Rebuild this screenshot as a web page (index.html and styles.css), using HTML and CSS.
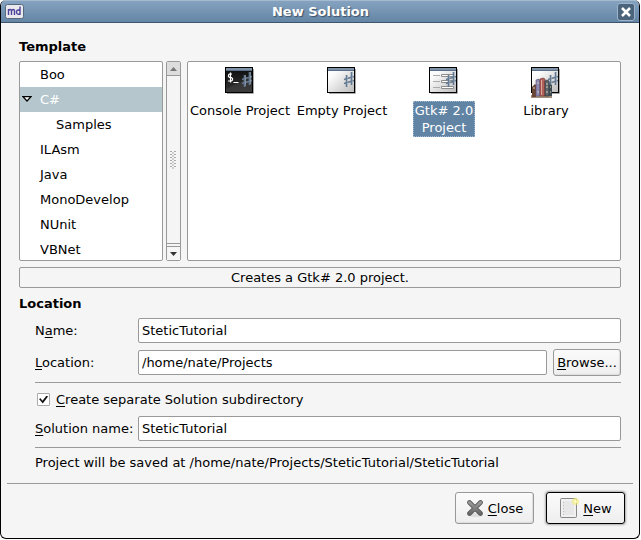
FILE: index.html
```html
<!DOCTYPE html>
<html lang="en">
<head>
<meta charset="utf-8">
<title>New Solution</title>
<link rel="stylesheet" href="styles.css">
</head>
<body>
<svg class="defs" aria-hidden="true">
  <defs>
    <linearGradient id="paper" x1="0" y1="0" x2="1" y2="1"><stop offset="0" stop-color="#fff"/><stop offset=".25" stop-color="#fbfbfb"/><stop offset="1" stop-color="#bbb"/></linearGradient>
    <linearGradient id="steel" x1="0" y1="0" x2="0" y2="1"><stop offset="0" stop-color="#9a9a9a"/><stop offset="1" stop-color="#686868"/></linearGradient>
    <linearGradient id="night" x1="0" y1="0" x2="0" y2="1"><stop offset="0" stop-color="#111"/><stop offset="1" stop-color="#343434"/></linearGradient>
    <g id="sharp" fill="none" stroke="#647a93">
      <path d="M19.500 8v12M24.500 5v13" stroke-width="1.600"/>
      <path d="M17 12.500l10-3M17 16.500l10-3" stroke-width="1.400"/>
      <path d="M20.500 8v11M25.500 5v12" stroke="#a5b3c2" stroke-width=".6"/>
    </g>
    <g id="frame">
      <path d="M2 26.500h26.500V2" fill="none" stroke="#aaa"/>
      <rect x=".5" y=".5" width="27" height="25" fill="url(#paper)" stroke="#000"/>
      <path d="M1 2.500h26" stroke="#8093a6" stroke-width="3"/>
      <path d="M1 3.500h26" stroke="#586f89"/>
    </g>
  </defs>
</svg>
<main class="window">
  <header class="titlebar">
    <svg class="logo" width="19" height="15" viewBox="0 0 19 15" aria-hidden="true">
      <rect x=".5" y=".5" width="18" height="14" rx="2" fill="#e9e9ee" stroke="#56687c"/>
      <g fill="none" stroke="#4b4399" stroke-width="1.400"><path d="M3.500 11V5M3.500 6.500q2-2 3 0V11M6.500 6.500q2.500-2 3 0V11M15 2.500V11M15 6.500q-3.500-1.500-3.500 1.500t3.500 2"/></g>
    </svg>
    <h1>New Solution</h1>
    <button class="close" type="button" aria-label="Close window">
      <svg width="10" height="10" viewBox="0 0 10 10"><path d="M1 1l8 8M9 1l-8 8" stroke="#fff" stroke-width="2.500"/></svg>
    </button>
  </header>
  <form class="content">
    <section class="template">
      <h2>Template</h2>
      <div class="panes">
        <ul class="tree">
          <li>Boo</li>
          <li class="current"><svg class="expander" width="10" height="6" viewBox="0 0 10 6" aria-hidden="true"><path d="M1 .7h8L5 5z" fill="#fff" stroke="#000" stroke-width="1.200"/></svg>C#</li>
          <li class="child">Samples</li>
          <li>ILAsm</li>
          <li>Java</li>
          <li>MonoDevelop</li>
          <li>NUnit</li>
          <li>VBNet</li>
        </ul>
        <div class="scrollbar">
          <button class="step off" type="button" aria-label="Scroll up"><svg width="7" height="4" viewBox="0 0 7 4"><path d="M0 4l3.500-4L7 4z" fill="#777"/></svg></button>
          <div class="thumb"><svg width="7" height="18" viewBox="0 0 7 18" aria-hidden="true"><path d="M1 0v18M5 0v18" stroke="#aaa" stroke-width="2" stroke-dasharray="1 2"/><path d="M3 1.500v16" stroke="#aaa" stroke-width="2" stroke-dasharray="1 2"/></svg></div>
          <button class="step" type="button" aria-label="Scroll down"><svg width="7" height="4" viewBox="0 0 7 4"><path d="M0 0h7L3.500 4z" fill="#333"/></svg></button>
        </div>
        <div class="projects">
          <button class="project" type="button">
            <svg width="30" height="32" viewBox="0 0 30 32" aria-hidden="true">
              <use href="#frame"/><path d="M1 4h26v21H1z" fill="url(#night)"/><path d="M1 22L27 9v16H1z" fill="#444" opacity=".5"/>
              <use href="#sharp"/>
              <path d="M7 7H4.500L3.500 8v1.500l1 1h2l1 1V13l-1 1H3M5.500 5.500v10M8.500 15.500h5" fill="none" stroke="#fff" stroke-width="1.200"/>
            </svg>
            <span>Console Project</span>
          </button>
          <button class="project" type="button">
            <svg width="30" height="32" viewBox="0 0 30 32" aria-hidden="true"><use href="#frame"/><use href="#sharp"/></svg>
            <span>Empty Project</span>
          </button>
          <button class="project selected" type="button">
            <svg width="30" height="32" viewBox="0 0 30 32" aria-hidden="true">
              <use href="#frame"/>
              <path d="M4 8.500h7M4 14.500h7M4 20.500h7" stroke="#aaa"/>
              <path d="M12.500 7.500h12v2h-12zM12.500 13.500h12v2h-12zM12.500 19.500h12v2h-12z" fill="#fff" stroke="#8c8c8c"/>
              <use href="#sharp"/>
            </svg>
            <span>Gtk# 2.0<br>Project</span>
          </button>
          <button class="project" type="button">
            <svg width="30" height="32" viewBox="0 0 30 32" aria-hidden="true">
              <use href="#frame"/><use href="#sharp"/>
              <path d="M0 28h21v3H0z" fill="#a08c78"/>
              <path d="M1 20l3-3 1 1v12H1z" fill="#6b4636"/>
              <path d="M5 13l3-1 1 2v15H5z" fill="#8d88b5" stroke="#55506f" stroke-width=".6"/>
              <path d="M9 12l3-1 2 1v17H9z" fill="#b2605a" stroke="#6b302b" stroke-width=".6"/>
              <path d="M10.500 13v15" stroke="#dba79b"/>
              <path d="M14 14l2-1 2 1v15h-4z" fill="#5c666d" stroke="#262d33" stroke-width=".6"/>
              <path d="M18 17l3 1v11h-3z" fill="#3f4b53"/>
              <path d="M6 16h2M6 25h2M15 17h2M15 20h2M15 25h2M2 21h2M19 20h1M19 25h1" stroke="#d6cfb4"/>
            </svg>
            <span>Library</span>
          </button>
        </div>
      </div>
      <p class="description">Creates a Gtk# 2.0 project.</p>
    </section>
    <section class="location">
      <h2>Location</h2>
      <div class="fields">
        <div class="row"><label for="name">N<u>a</u>me:</label><input id="name" type="text" value="SteticTutorial"></div>
        <div class="row"><label for="path"><u>L</u>ocation:</label><input id="path" type="text" value="/home/nate/Projects"><button class="button browse" type="button"><span><u>B</u>rowse...</span></button></div>
        <hr>
        <div class="check"><input id="separate" type="checkbox" checked><label for="separate"><u>C</u>reate separate Solution subdirectory</label></div>
        <div class="row"><label for="solution"><u>S</u>olution name:</label><input id="solution" type="text" value="SteticTutorial"></div>
        <hr>
        <p class="saved">Project will be saved at /home/nate/Projects/SteticTutorial/SteticTutorial</p>
      </div>
    </section>
  </form>
  <footer class="actions">
    <button class="button" type="button">
      <svg width="18" height="20" viewBox="0 0 18 20" aria-hidden="true"><ellipse cx="9" cy="17" rx="7" ry="2" fill="#ddd"/><path d="M3.500 4.500l11 11M14.500 4.500l-11 11" stroke="#555" stroke-width="4.600" stroke-linecap="round"/><path d="M3.500 4.500l11 11M14.500 4.500l-11 11" stroke="url(#steel)" stroke-width="3" stroke-linecap="round"/></svg>
      <span><u>C</u>lose</span>
    </button>
    <button class="button default" type="button">
      <svg width="20" height="20" viewBox="0 0 20 20" aria-hidden="true"><rect x="1.500" y=".5" width="16" height="19" rx="1" fill="#e7e7e7" stroke="#888"/><path d="M3 2h13v16H3z" fill="none" stroke="#fafafa"/><path d="M4.500 4v13" stroke="#bbb" stroke-dasharray="1 2"/><circle cx="16.500" cy="3.500" r="3.500" fill="#f5ee70" opacity=".65"/><circle cx="16.500" cy="3.500" r="1.500" fill="#fffbc0"/></svg>
      <span><u>N</u>ew</span>
    </button>
  </footer>
</main>
</body>
</html>
```
FILE: styles.css
```css
* { box-sizing: border-box; }
body {
  margin: 0;
  background: #fff;
  color: #000;
  font: 13px/17px "DejaVu Sans", sans-serif;
}
h1, h2, p, ul { margin: 0; padding: 0; }
button, input { font: inherit; color: inherit; }
u { text-underline-offset: 2px; text-decoration-thickness: 1px; }
.defs { position: absolute; width: 0; height: 0; }

.window {
  margin: 0 1px 1px 0;
  border: solid #000;
  border-width: 0 1px 1px;
  border-radius: 6px;
  background: #f5f5f5;
  overflow: hidden;
}
.titlebar {
  display: flex;
  align-items: center;
  height: 23px;
  padding: 0 4px;
  border-top: 1px solid #a3bacf;
  border-bottom: 1px solid #3e566d;
  background: linear-gradient(#85a3c0, #6485a5);
}
h1 {
  flex: 1;
  color: #fff;
  font-size: 13px;
  text-align: center;
  text-shadow: 1px 1px 1px #3c5268;
}
.close {
  display: flex;
  align-items: center;
  justify-content: center;
  width: 18px;
  height: 18px;
  padding: 0;
  border: 1px solid #9db4ca;
  border-radius: 3px;
  background: #4b647c;
}

.content { padding: 14px 18px 0; }
h2 { font-size: 13px; line-height: 20px; }
.panes {
  display: flex;
  height: 200px;
  margin: 4px 0 6px;
}
.tree, .projects {
  border: 1px solid #999;
  border-radius: 2px;
  background: #fff;
}
.tree {
  width: 144px;
  list-style: none;
  overflow: hidden;
}
.tree li {
  position: relative;
  height: 25px;
  padding-left: 20px;
  line-height: 25px;
}
.tree .child { padding-left: 36px; }
.tree .current { background: #b5c7cd; color: #fff; }
.expander { position: absolute; left: 2px; top: 9px; }
.scrollbar {
  display: flex;
  flex-direction: column;
  width: 15px;
  margin: 0 6px 0 3px;
  border: 1px solid #999;
  border-radius: 2px;
  background: #f5f5f5;
}
.step, .thumb {
  display: flex;
  align-items: center;
  justify-content: center;
}
.step {
  height: 14px;
  padding: 0;
  border: 0;
  border-top: 1px solid #999;
  background: #f5f5f5;
}
.step.off { border-top: 0; border-bottom: 1px solid #999; background: #ddd; }
.thumb { flex: 1; margin-bottom: 2px; border-bottom: 1px solid #999; }
.projects {
  flex: 1;
  display: grid;
  grid-template-columns: repeat(4, 102px);
  align-content: start;
  padding: 5px 1px;
}
.project {
  display: flex;
  flex-direction: column;
  align-items: center;
  padding: 0;
  border: 0;
  background: none;
  white-space: nowrap;
}
.project span { margin-top: 2px; padding: 1px 2px; }
.selected span {
  background: #6184a5;
  color: #fff;
  outline: 1px dotted #9eb8d0;
  outline-offset: -1px;
}
.description {
  border: 1px solid #999;
  border-radius: 2px;
  line-height: 19px;
  text-align: center;
}

.location { margin-top: 6px; }
.fields { padding: 4px 0 0 16px; }
.row {
  display: flex;
  align-items: center;
}
.row + .row { margin-top: 6px; }
.row label { width: 103px; }
.row input {
  flex: 1;
  min-width: 0;
  height: 25px;
  padding: 0 3px;
  border: 1px solid #999;
  border-radius: 2px;
  background: #fff;
}
hr {
  height: 1px;
  margin: 6px 0;
  border: 0;
  background: #999;
}
.check {
  display: flex;
  align-items: center;
  gap: 6px;
  height: 21px;
  margin-bottom: 6px;
  padding-left: 2px;
}
.check input {
  appearance: none;
  display: grid;
  place-items: center;
  width: 13px;
  height: 13px;
  margin: 0;
  border: 1px solid #aaa;
  border-radius: 1px;
  background: #fff;
}
.check input:checked::before {
  content: "";
  width: 9px;
  height: 8px;
  background: #111;
  clip-path: polygon(0 45%, 18% 35%, 38% 65%, 85% 0, 100% 12%, 42% 100%);
}
.saved { line-height: 17px; }

.button {
  display: flex;
  align-items: center;
  justify-content: center;
  gap: 4px;
  padding: 0;
  border: 1px solid #999;
  border-radius: 3px;
  background: linear-gradient(#fbfbfb, #eee);
  box-shadow: inset -1px -1px 1px #ddd;
}
.browse {
  width: 68px;
  height: 27px;
  margin-left: 6px;
}
.actions {
  display: flex;
  justify-content: flex-end;
  gap: 12px;
  margin: 12px 6px 0;
  padding: 8px 8px 14px;
  border-top: 1px solid #999;
}
.actions .button { width: 79px; height: 32px; }
.actions .default {
  border-color: #000;
  box-shadow: 0 0 2px 1px #aaa;
}
```
